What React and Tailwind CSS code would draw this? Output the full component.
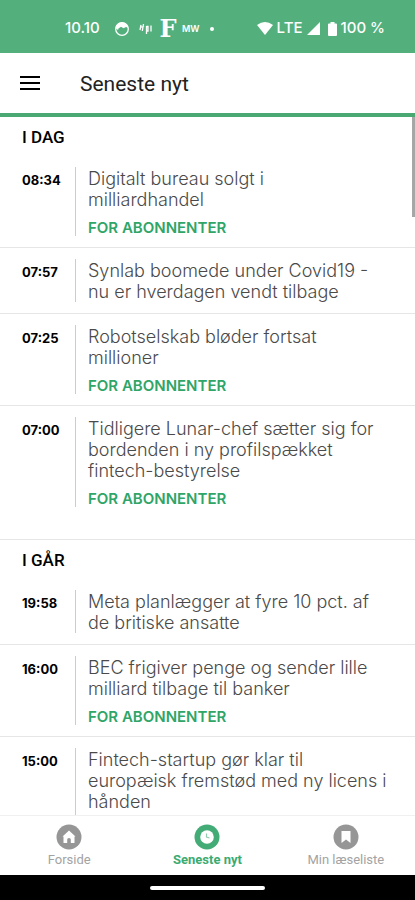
const sections = [
  {
    title: 'I DAG',
    articles: [
      { time: '08:34', title: 'Digitalt bureau solgt i\nmilliardhandel', paid: true },
      { time: '07:57', title: 'Synlab boomede under Covid19 -\nnu er hverdagen vendt tilbage', paid: false },
      { time: '07:25', title: 'Robotselskab bløder fortsat\nmillioner', paid: true },
      { time: '07:00', title: 'Tidligere Lunar-chef sætter sig for\nbordenden i ny profilspækket\nfintech-bestyrelse', paid: true },
    ],
  },
  {
    title: 'I GÅR',
    articles: [
      { time: '19:58', title: 'Meta planlægger at fyre 10 pct. af\nde britiske ansatte', paid: false },
      { time: '16:00', title: 'BEC frigiver penge og sender lille\nmilliard tilbage til banker', paid: true },
      { time: '15:00', title: 'Fintech-startup gør klar til\neuropæisk fremstød med ny licens i\nhånden', paid: false },
    ],
  },
];

const StatusBar = () => (
  <div className="flex h-[53px] shrink-0 items-center justify-between bg-[#53b07d] pl-[65px] pr-[30px] pt-1 font-['Inter',sans-serif] text-[15px] font-medium text-white">
    <div className="flex items-center">
      <span className="w-[49px]">10.10</span>
      <svg className="h-4 w-4" viewBox="0 0 16 16">
        <circle cx="8" cy="8" r="6.300" fill="none" stroke="#fff" strokeWidth="1.300" />
        <path d="M1.500 7C2 3.500 5 1.500 8 1.500s6 2 6.500 5.500L12 6 9.500 7.200 7 5.800 4.500 7.400 4 9z" fill="#fff" />
      </svg>
      <svg className="ml-2 h-4 w-4" viewBox="0 0 16 16" fill="none" stroke="#fff" strokeWidth="1.300">
        <path d="M3 4 2 9M5.500 3 4.300 10M2.500 6.500 6 5M8.500 5v8M8.500 5.500h1.500v4.500H8.500M13 4.500v6" />
      </svg>
      <span className="ml-1 w-5 text-center font-['DejaVu_Serif',serif] text-2xl leading-6 font-bold">F</span>
      <span className="ml-1 w-4 text-center text-[9px] font-semibold">MW</span>
      <span className="ml-3 h-1 w-1 rounded-full bg-white" />
    </div>
    <div className="flex items-center">
      <svg className="h-[13px] w-4" viewBox="0 0 16 13" fill="#fff">
        <path d="M0 3Q8-3 16 3L8 13z" />
      </svg>
      <span className="ml-1">LTE</span>
      <svg className="ml-1 h-[13px] w-[13px]" viewBox="0 0 13 13" fill="#fff">
        <path d="M13 0v13H0z" />
      </svg>
      <svg className="ml-2 h-[14px] w-[9px]" viewBox="0 0 9 14" fill="#fff">
        <path d="M2.500 0h4v1.500H8q1 0 1 1V13q0 1-1 1H1q-1 0-1-1V2.500q0-1 1-1h1.500z" />
      </svg>
      <span className="ml-1 whitespace-nowrap">100 %</span>
    </div>
  </div>
);

const Header = () => (
  <header className="flex h-16 shrink-0 items-center border-b-4 border-[#4aa873] bg-white px-5">
    <button type="button" aria-label="Menu" className="flex w-5 flex-col gap-1">
      <span className="h-0.5 w-full bg-black" />
      <span className="h-0.5 w-full bg-black" />
      <span className="h-0.5 w-full bg-black" />
    </button>
    <h1 className="ml-10 pt-1 text-[21px] text-[#222]">Seneste nyt</h1>
  </header>
);

const Article = ({ article }) => (
  <li className="group border-b border-[#e6e6e6] py-[11px] pl-[22px] pr-3 last:border-b-0">
    <a href="#artikel" className="flex font-['Inter',sans-serif]">
      <time className="w-[53px] shrink-0 pt-0.5 text-[13px] leading-[22px] font-bold text-black">{article.time}</time>
      <div className="flex-1 border-l border-[#ccc] pl-3 group-last:min-h-[90px]">
        <p className="whitespace-pre-line pt-px text-lg leading-[21px] font-light text-[#4a4a4a]">{article.title}</p>
        {article.paid && (
          <p className="pt-[9px] text-[15px] leading-[17px] font-semibold text-[#2fa567]">FOR ABONNENTER</p>
        )}
      </div>
    </a>
  </li>
);

const tabs = [
  {
    label: 'Forside',
    active: false,
    icon: <path d="M13 6.500 19.500 12.500H18.500V19H14.800V15.500q0-1.500-1.800-1.500t-1.800 1.500V19H7.500V12.500H6.500z" fill="#fff" />,
  },
  {
    label: 'Seneste nyt',
    active: true,
    icon: (
      <>
        <circle cx="13" cy="13" r="6.800" fill="#fff" />
        <path d="M12.500 9.500V13l3 1" fill="none" stroke="#8fcdb0" strokeWidth="1.200" />
      </>
    ),
  },
  {
    label: 'Min læseliste',
    active: false,
    icon: <path d="M8.500 7h9v12L13 15.500 8.500 19z" fill="#fff" />,
  },
];

const TabBar = () => (
  <nav className="grid h-[60px] shrink-0 grid-cols-3 border-t border-[#f0f0f0] bg-white">
    {tabs.map((tab) => (
      <button
        key={tab.label}
        type="button"
        className={`flex flex-col items-center pt-2 text-[13px] leading-5 ${tab.active ? 'font-bold text-[#3bab71]' : 'text-[#a3a3a3]'}`}
      >
        <svg className="h-[26px] w-[26px]" viewBox="0 0 26 26">
          <circle cx="13" cy="13" r="12.500" fill={tab.active ? '#43ab76' : '#969696'} />
          {tab.icon}
        </svg>
        <span>{tab.label}</span>
      </button>
    ))}
  </nav>
);

export default function App() {
  return (
    <div className="flex h-screen flex-col bg-white font-['Roboto',sans-serif]">
      <StatusBar />
      <Header />
      <main className="relative flex-1 overflow-hidden">
        {sections.map((section) => (
          <section key={section.title} className="border-b border-[#e6e6e6] pb-[21px]">
            <h2 className="flex h-[39px] items-center pt-0.5 pl-[22px] text-[17px] font-medium text-black">{section.title}</h2>
            <ul>
              {section.articles.map((article) => (
                <Article key={article.time} article={article} />
              ))}
            </ul>
          </section>
        ))}
        <div className="absolute top-0 right-0 h-[100px] w-[3px] bg-[#a6a6a6]" />
      </main>
      <TabBar />
      <div className="flex h-[25px] shrink-0 items-center justify-center bg-black">
        <div className="h-1 w-[115px] rounded-full bg-white" />
      </div>
    </div>
  );
}
